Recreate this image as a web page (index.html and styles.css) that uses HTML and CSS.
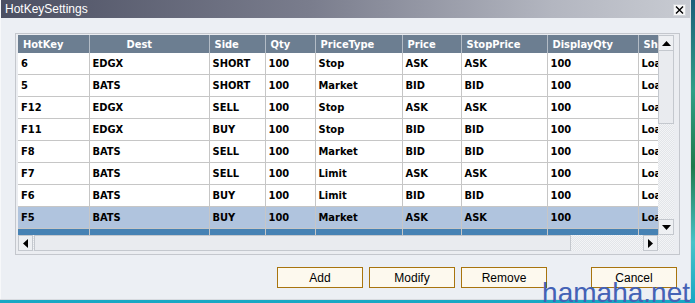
FILE: index.html
```html
<!DOCTYPE html>
<html>
<head>
<meta charset="utf-8">
<title>HotKeySettings</title>
<link rel="stylesheet" href="styles.css">
</head>
<body>
<div class="desktop">
  <div class="window">
    <div class="titlebar">
      <span class="title">HotKeySettings</span>
      <span class="close"><svg width="9" height="8" viewBox="0 0 9 8"><path d="M1 0.5 L8 7.5 M8 0.5 L1 7.5" stroke="#000" stroke-width="1.4" fill="none"/></svg></span>
    </div>
    <div class="content">
      <div class="grid">
        <div class="grid-top">
          <div class="table-view">
            <table class="hk">
              <colgroup>
                <col class="c-hotkey"><col class="c-dest"><col class="c-side"><col class="c-qty"><col class="c-ptype"><col class="c-price"><col class="c-stop"><col class="c-disp"><col class="c-sh">
              </colgroup>
              <thead>
                <tr><th>HotKey</th><th class="th-dest">Dest</th><th>Side</th><th>Qty</th><th>PriceType</th><th>Price</th><th>StopPrice</th><th>DisplayQty</th><th>Show</th></tr>
              </thead>
              <tbody>
                <tr><td>6</td><td>EDGX</td><td>SHORT</td><td>100</td><td>Stop</td><td>ASK</td><td>ASK</td><td>100</td><td>Load</td></tr>
                <tr><td>5</td><td>BATS</td><td>SHORT</td><td>100</td><td>Market</td><td>BID</td><td>BID</td><td>100</td><td>Load</td></tr>
                <tr><td>F12</td><td>EDGX</td><td>SELL</td><td>100</td><td>Stop</td><td>ASK</td><td>ASK</td><td>100</td><td>Load</td></tr>
                <tr><td>F11</td><td>EDGX</td><td>BUY</td><td>100</td><td>Stop</td><td>BID</td><td>BID</td><td>100</td><td>Load</td></tr>
                <tr><td>F8</td><td>BATS</td><td>SELL</td><td>100</td><td>Market</td><td>BID</td><td>BID</td><td>100</td><td>Load</td></tr>
                <tr><td>F7</td><td>BATS</td><td>SELL</td><td>100</td><td>Limit</td><td>ASK</td><td>ASK</td><td>100</td><td>Load</td></tr>
                <tr><td>F6</td><td>BATS</td><td>BUY</td><td>100</td><td>Limit</td><td>BID</td><td>BID</td><td>100</td><td>Load</td></tr>
                <tr class="sel"><td>F5</td><td>BATS</td><td>BUY</td><td>100</td><td>Market</td><td>ASK</td><td>ASK</td><td>100</td><td>Load</td></tr>
                <tr class="cur"><td>F4</td><td>BATS</td><td>BUY</td><td>100</td><td>Market</td><td>ASK</td><td>ASK</td><td>100</td><td>Load</td></tr>
              </tbody>
            </table>
          </div>
          <div class="vscroll">
            <div class="sbtn"><svg width="9" height="5" viewBox="0 0 9 5"><path d="M0 5 L4.5 0 L9 5 Z" fill="#000"/></svg></div>
            <div class="vthumb"></div>
            <div class="vtrack"></div>
            <div class="sbtn"><svg width="9" height="5" viewBox="0 0 9 5"><path d="M0 0 L9 0 L4.5 5 Z" fill="#000"/></svg></div>
          </div>
        </div>
        <div class="grid-bottom">
          <div class="hscroll">
            <div class="sbtn h"><svg width="5" height="9" viewBox="0 0 5 9"><path d="M5 0 L0 4.5 L5 9 Z" fill="#000"/></svg></div>
            <div class="hthumb"></div>
            <div class="htrack"></div>
            <div class="sbtn h"><svg width="5" height="9" viewBox="0 0 5 9"><path d="M0 0 L5 4.5 L0 9 Z" fill="#000"/></svg></div>
          </div>
          <div class="corner"></div>
        </div>
      </div>
      <div class="buttons">
        <button class="btn">Add</button>
        <button class="btn">Modify</button>
        <button class="btn">Remove</button>
        <button class="btn cancel">Cancel</button>
      </div>
    </div>
  </div>
  <div class="watermark">hamaha.net</div>
</div>
</body>
</html>
```
FILE: styles.css
```css
html, body {
  margin: 0;
  padding: 0;
}
body {
  width: 695px;
  height: 303px;
  overflow: hidden;
  background: #e9ecf1;
}
.desktop {
  position: relative;
  width: 695px;
  height: 303px;
  background:
    linear-gradient(180deg, #1d5f7a 0%, #2f9f86 30%, #1f7a4c 55%, #48c3c8 80%, #17a7c4 100%);
}
.window {
  width: 689px;
  height: 299px;
  background: #eceff4;
  border-left: 1px solid #f7f8fa;
  box-shadow: 0 1px 0 #d8dbe0, 1px 0 0 #dfe2e7;
}
.titlebar {
  height: 18px;
  display: flex;
  align-items: center;
  justify-content: space-between;
  padding: 0 4px 0 4px;
  background: linear-gradient(90deg, #4c5063 0%, #7a7d8d 45%, #b3b6c0 80%, #c8cbd2 100%);
}
.title {
  color: #ffffff;
  font-family: "Liberation Sans", Arial, sans-serif;
  font-size: 12px;
  line-height: 18px;
}
.close {
  width: 11px;
  height: 10px;
  margin-top: 1px;
  background: #f7f7f8;
  border: 1px solid #d3d6db;
  display: flex;
  align-items: center;
  justify-content: center;
}
.content {
  padding: 15px 0 0 14px;
}
.grid {
  width: 660px;
  height: 218px;
  border: 1px solid #c4c7cd;
  padding: 1px 1px 1px 2px;
  background: #ebedf1;
}
.grid-top {
  display: flex;
  height: 200px;
}
.table-view {
  width: 640px;
  height: 200px;
  overflow: hidden;
  background: #ffffff;
}
.hk {
  border-collapse: collapse;
  table-layout: fixed;
  width: 680px;
  font-family: "DejaVu Sans Condensed", "DejaVu Sans", sans-serif;
  font-stretch: semi-condensed;
  font-weight: bold;
  font-size: 11px;
  color: #000;
}
.c-hotkey { width: 71px; }
.c-dest { width: 120px; }
.c-side { width: 56px; }
.c-qty { width: 50px; }
.c-ptype { width: 87px; }
.c-price { width: 59px; }
.c-stop { width: 86px; }
.c-disp { width: 91px; }
.c-sh { width: 60px; }
.hk th {
  height: 18px;
  padding: 0 0 0 5px;
  background: #6c7e91;
  color: #ffffff;
  text-align: left;
  border-right: 1px solid #b3bcc6;
  white-space: nowrap;
  overflow: hidden;
}
.hk th.th-dest {
  padding-left: 37px;
}
.hk td {
  height: 21px;
  padding: 0 0 0 3px;
  border-right: 1px solid #c6c6c6;
  border-bottom: 1px solid #c6c6c6;
  white-space: nowrap;
  overflow: hidden;
}
.hk tr.sel td {
  background: #b0c4de;
}
.hk tr.cur td {
  background: #4682b4;
  color: #4682b4;
}
.vscroll {
  width: 16px;
  display: flex;
  flex-direction: column;
  background: repeating-conic-gradient(#f3f4f6 0 25%, #e2e5e9 0 50%) 0 0 / 2px 2px;
}
.sbtn {
  width: 14px;
  height: 14px;
  border: 1px solid #c4c8ce;
  background: #eef0f3;
  display: flex;
  align-items: center;
  justify-content: center;
}
.vthumb {
  height: 72px;
  border: 1px solid #c4c8ce;
  border-top: 0;
  background: #e9ebef;
}
.vtrack {
  flex: 1;
}
.grid-bottom {
  display: flex;
  height: 16px;
}
.hscroll {
  width: 640px;
  display: flex;
  background: repeating-conic-gradient(#f3f4f6 0 25%, #e2e5e9 0 50%) 0 0 / 2px 2px;
}
.sbtn.h {
  width: 13px;
}
.hthumb {
  width: 535px;
  margin-left: 1px;
  border: 1px solid #c4c8ce;
  background: #e9ebef;
}
.htrack {
  flex: 1;
}
.corner {
  width: 16px;
  background: repeating-conic-gradient(#f3f4f6 0 25%, #e2e5e9 0 50%) 0 0 / 2px 2px;
}
.buttons {
  display: flex;
  margin-top: 12px;
  padding-left: 262px;
  gap: 6px;
}
.btn {
  width: 86px;
  height: 21px;
  margin: 0;
  padding: 0;
  background: #fdf9ee;
  border: 1px solid #a8740e;
  border-radius: 0;
  font-family: "Liberation Sans", Arial, sans-serif;
  font-size: 12px;
  color: #000;
}
.btn.cancel {
  margin-left: 38px;
}
.watermark {
  position: absolute;
  right: 5px;
  bottom: -5px;
  font-family: "Liberation Sans", Arial, sans-serif;
  font-size: 28px;
  color: #4462b6;
  line-height: 30px;
}
```
